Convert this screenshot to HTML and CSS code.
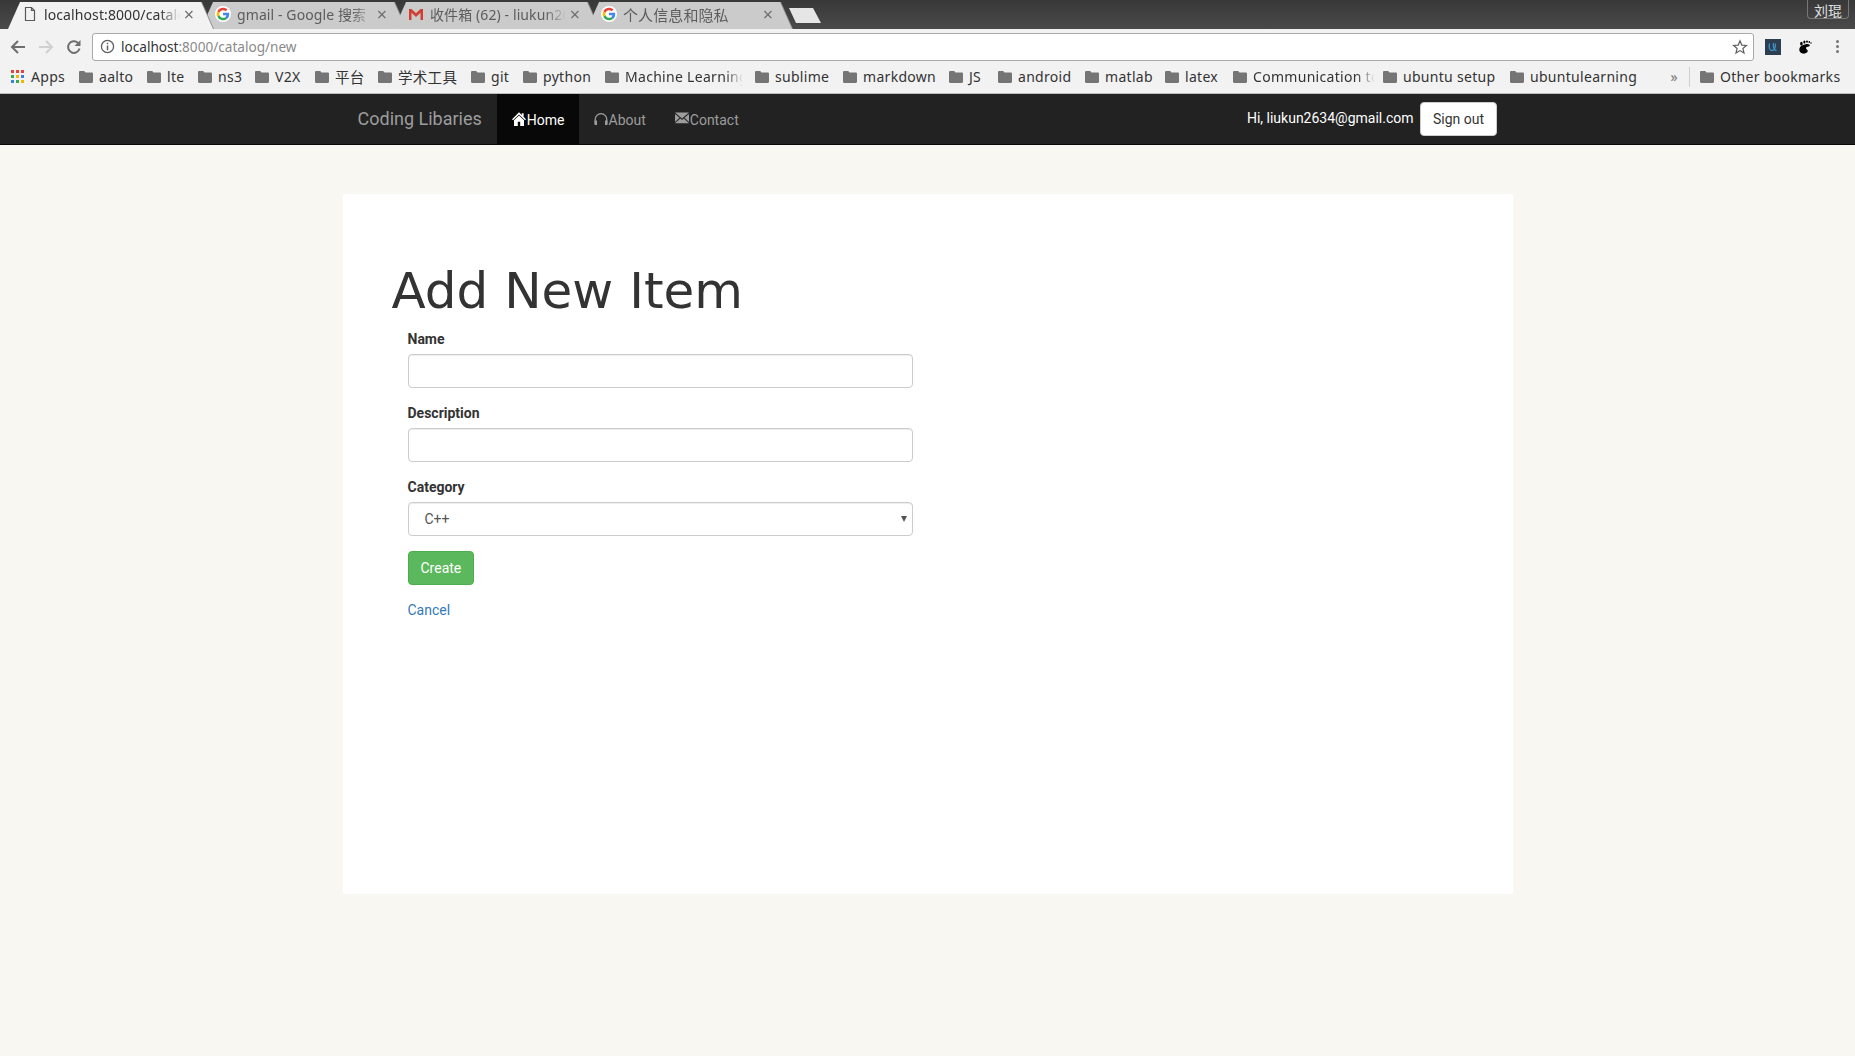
FILE: index.html
```html
<!DOCTYPE html>
<html lang="en">
<head>
    <meta charset="UTF-8">
    <meta name="viewport" content="width=device-width, initial-scale=1.0">
    <title>Add New Item</title>
    <link rel="stylesheet" href="styles.css">
</head>
<body>
<svg class="defs" width="0" height="0">
    <symbol id="folder" viewBox="0 0 14 12"><path d="M1.2 0h4l1.3 1.6h6.3c.7 0 1.2.5 1.2 1.2v8c0 .7-.5 1.2-1.2 1.2H1.2C.5 12 0 11.500 0 10.800V1.200C0 .5.500 0 1.200 0z" fill="#757575"/></symbol>
    <symbol id="google" viewBox="3 3 42 42">
        <circle cx="24" cy="24" r="21" fill="#fff"/>
        <path fill="#ea4335" d="M24 14c2.700 0 5 .9 6.900 2.700l4.800-4.800C32.600 9.100 28.700 7.400 24 7.400c-6.500 0-12.100 3.700-14.800 9.100l5.600 4.300C16.100 16.900 19.700 14 24 14z"/>
        <path fill="#4285f4" d="M40.200 24.400c0-1.200-.1-2.300-.3-3.400H24v6.400h9.100c-.4 2.100-1.600 3.900-3.400 5.100l5.400 4.200c3.200-2.900 5.100-7.200 5.100-12.300z"/>
        <path fill="#fbbc05" d="M14.800 27.200c-.3-1-.5-2.100-.5-3.200s.2-2.200.5-3.200l-5.600-4.300C8.100 18.800 7.400 21.300 7.400 24s.7 5.200 1.800 7.500l5.600-4.300z"/>
        <path fill="#34a853" d="M24 40.600c4.500 0 8.300-1.500 11.100-4l-5.400-4.200c-1.500 1-3.400 1.600-5.700 1.600-4.300 0-7.900-2.900-9.200-6.800l-5.600 4.300c2.700 5.400 8.300 9.100 14.800 9.100z"/>
    </symbol>
</svg>

<div class="tabstrip">
    <div class="tab tab-active">
        <svg class="tab-icon" viewBox="0 0 16 16"><path d="M3.500 1.500h6l3 3v10h-9z M9.500 1.500v3h3" fill="#f2f2f2" stroke="#5a5a5a" stroke-width="1.200"/></svg>
        <span class="tab-title">localhost:8000/catalog/new</span>
        <span class="tab-close">×</span>
    </div>
    <div class="tab">
        <svg class="tab-icon"><use href="#google"/></svg>
        <span class="tab-title">gmail - Google 搜索</span>
        <span class="tab-close">×</span>
    </div>
    <div class="tab">
        <svg class="tab-icon" viewBox="0 0 16 16"><path d="M1 3h2.500L8 7.200 12.500 3H15v11h-2.500V6.800L8 11 3.500 6.800V14H1z" fill="#d23f31"/></svg>
        <span class="tab-title">收件箱 (62) - liukun2634@gmail.com</span>
        <span class="tab-close">×</span>
    </div>
    <div class="tab">
        <svg class="tab-icon"><use href="#google"/></svg>
        <span class="tab-title tab-title-cjk">个人信息和隐私</span>
        <span class="tab-close">×</span>
    </div>
    <div class="new-tab"></div>
    <div class="profile">刘琨</div>
</div>

<div class="toolbar">
    <svg class="tool" viewBox="0 0 16 16"><path d="M15 8H2.500M8 2L2 8l6 6" fill="none" stroke="#6e6e6e" stroke-width="2"/></svg>
    <svg class="tool" viewBox="0 0 16 16"><path d="M1 8h12.500M8 2l6 6-6 6" fill="none" stroke="#d0d0d0" stroke-width="2"/></svg>
    <svg class="tool" viewBox="0 0 16 16"><path d="M13.500 9.500A5.800 5.800 0 1 1 12 4" fill="none" stroke="#6e6e6e" stroke-width="2"/><path d="M14.500 1v6h-6z" fill="#6e6e6e"/></svg>
    <div class="urlbar">
        <svg class="info" viewBox="0 0 16 16"><circle cx="8" cy="8" r="6.500" fill="none" stroke="#5f5f5f" stroke-width="1.400"/><path d="M7.200 7h1.600v5H7.200zM7.200 4h1.600v1.600H7.200z" fill="#5f5f5f"/></svg>
        <span class="url">localhost<span class="url-rest">:8000/catalog/new</span></span>
        <svg class="star" viewBox="0 0 16 16"><path d="M8 1.800l1.800 4.300 4.600.4-3.500 3 1.100 4.500L8 11.600 4 14l1.100-4.500-3.500-3 4.600-.4z" fill="none" stroke="#5f5f5f" stroke-width="1.200"/></svg>
    </div>
    <div class="ext-u"><svg viewBox="0 0 16 16"><path d="M4.500 4.500c-.8 3.500-.3 7 2.500 7s3.500-3.500 3.500-7M8.500 4c-.5 3 0 7.500 3 7.500" fill="none" stroke="#3f8fc0" stroke-width="1.300"/></svg></div>
    <svg class="ext-foot" viewBox="0 0 16 16"><path d="M8.800 5.200c2.800-.5 4.600.6 3.800 1.900-.8 1.100-3.200.4-3.600 1.800-.3 1.200 2 1.500 1.800 3.200-.2 1.700-2.700 3-5 2.400C3 13.900 1.700 11.500 2.600 9c.8-2.200 3.500-3.500 6.200-3.800z" fill="#000"/><ellipse cx="4.400" cy="4.700" rx="1.300" ry="1.900" fill="#000"/><ellipse cx="7.400" cy="3" rx="1.100" ry="1.500" fill="#000"/><ellipse cx="10" cy="2.600" rx=".9" ry="1.200" fill="#000"/><ellipse cx="12.300" cy="3" rx=".8" ry="1" fill="#000"/><ellipse cx="14" cy="4" rx=".7" ry=".8" fill="#000"/></svg>
    <div class="dots"><i></i><i></i><i></i></div>
</div>

<div class="bookmarks">
    <span class="bm bm-apps">
        <span class="apps-grid">
            <i class="c-r"></i><i class="c-r"></i><i class="c-r"></i>
            <i class="c-g"></i><i class="c-y"></i><i class="c-b"></i>
            <i class="c-b"></i><i class="c-g"></i><i class="c-y"></i>
        </span>Apps
    </span>
    <span class="bm bm-aalto"><svg><use href="#folder"/></svg>aalto</span>
    <span class="bm bm-lte"><svg><use href="#folder"/></svg>lte</span>
    <span class="bm bm-ns3"><svg><use href="#folder"/></svg>ns3</span>
    <span class="bm bm-v2x"><svg><use href="#folder"/></svg>V2X</span>
    <span class="bm bm-pt bm-cjk"><svg><use href="#folder"/></svg>平台</span>
    <span class="bm bm-xs bm-cjk"><svg><use href="#folder"/></svg>学术工具</span>
    <span class="bm bm-git"><svg><use href="#folder"/></svg>git</span>
    <span class="bm bm-python"><svg><use href="#folder"/></svg>python</span>
    <span class="bm bm-ml"><svg><use href="#folder"/></svg><span class="bm-text">Machine Learning</span></span>
    <span class="bm bm-sublime"><svg><use href="#folder"/></svg>sublime</span>
    <span class="bm bm-markdown"><svg><use href="#folder"/></svg>markdown</span>
    <span class="bm bm-js"><svg><use href="#folder"/></svg>JS</span>
    <span class="bm bm-android"><svg><use href="#folder"/></svg>android</span>
    <span class="bm bm-matlab"><svg><use href="#folder"/></svg>matlab</span>
    <span class="bm bm-latex"><svg><use href="#folder"/></svg>latex</span>
    <span class="bm bm-comm"><svg><use href="#folder"/></svg><span class="bm-text">Communication tools</span></span>
    <span class="bm bm-setup"><svg><use href="#folder"/></svg>ubuntu setup</span>
    <span class="bm bm-learn"><svg><use href="#folder"/></svg>ubuntulearning</span>
    <span class="bm-more">»</span>
    <span class="bm bm-other"><svg><use href="#folder"/></svg>Other bookmarks</span>
</div>

<nav class="navbar">
    <div class="nav-inner">
        <a class="brand">Coding Libaries</a>
        <a class="nav-link active">
            <svg class="glyph" viewBox="0 0 14 14"><path d="M7 .3L0 7.200l1 1 6-5.700 6 5.700 1-1-2.400-2.400V1.200H9.800v1.800L7 .3zM2 8.300V14h3.800V9.800h2.400V14H12V8.300L7 3.600z" fill="#fff"/></svg>Home
        </a>
        <a class="nav-link">
            <svg class="glyph" viewBox="0 0 14 14"><path d="M1.200 12V7.500a5.800 5.800 0 0 1 11.600 0V12" fill="none" stroke="#9d9d9d" stroke-width="1.300"/><path d="M.6 8.500h2.400V13H.6zM11 8.500h2.400V13H11z" fill="#9d9d9d"/></svg>About
        </a>
        <a class="nav-link">
            <svg class="glyph glyph-mail" viewBox="0 0 14 14"><path d="M0 1.500h14L7 7.500zM0 3v8l4.500-4.200zM14 3v8L9.500 6.800zM0 12.300h14L8.700 7.600 7 9 5.300 7.600z" fill="#9d9d9d"/></svg>Contact
        </a>
        <div class="nav-right">
            <span class="greeting">Hi, liukun2634@gmail.com</span>
            <button class="btn-signout">Sign out</button>
        </div>
    </div>
</nav>

<div class="card">
    <h1>Add New Item</h1>
    <form class="item-form">
        <div class="form-group">
            <label for="name">Name</label>
            <input type="text" id="name">
        </div>
        <div class="form-group">
            <label for="description">Description</label>
            <input type="text" id="description">
        </div>
        <div class="form-group">
            <label for="category">Category</label>
            <select id="category">
                <option>C++</option>
                <option>Python</option>
            </select>
        </div>
        <button type="button" class="btn-create">Create</button>
    </form>
    <a class="cancel" href="#">Cancel</a>
</div>
</body>
</html>
```

FILE: styles.css
```css
* {
    box-sizing: border-box;
}
html, body {
    height: 100%;
}
body {
    margin: 0;
    background: #f8f7f2;
    color: #333;
    font-family: Roboto, Arial, sans-serif;
    font-size: 14px;
    overflow: hidden;
}
.defs {
    display: block;
    height: 0;
}

/* browser tabs */
.tabstrip {
    display: flex;
    height: 29px;
    padding-left: 8px;
    background: linear-gradient(#383838, #4a4a4a);
}
.tab {
    position: relative;
    flex: none;
    display: flex;
    align-items: center;
    width: 205px;
    height: 27px;
    margin-top: 2px;
    margin-right: -12px;
    padding: 0 17px 3px 14px;
    color: #5c5c5c;
    font-family: "Noto Sans", "Noto Sans CJK SC", sans-serif;
    font-size: 14px;
    letter-spacing: 0.1px;
    filter: drop-shadow(1px 0 0 #8f8f8f);
}
.tab::before {
    content: "";
    position: absolute;
    inset: 0;
    z-index: -1;
    background: #cbcbcb;
    clip-path: polygon(0 100%, 12px 0, 193px 0, 205px 100%);
}
.tab-active {
    z-index: 1;
    color: #333;
}
.tab-active::before {
    background: #f2f2f2;
}
.tab-icon {
    flex: none;
    width: 16px;
    height: 16px;
    margin-right: 4px;
}
.tab-title {
    flex: 1;
    margin-left: 2px;
    overflow: hidden;
    white-space: nowrap;
    -webkit-mask-image: linear-gradient(to right, #000 85%, transparent 100%);
    mask-image: linear-gradient(to right, #000 85%, transparent 100%);
}
.tab-title-cjk {
    font-size: 15px;
    -webkit-mask-image: none;
    mask-image: none;
}
.tab-close {
    flex: none;
    width: 14px;
    margin-left: 2px;
    color: #6e6e6e;
    font-size: 18px;
    text-align: center;
}
.new-tab {
    flex: none;
    width: 32px;
    height: 15px;
    margin: 8px 0 0 9px;
    background: #e6e6e6;
    clip-path: polygon(0 0, 24px 0, 100% 100%, 7px 100%);
}
.profile {
    flex: none;
    height: 19px;
    margin-left: auto;
    margin-right: 6px;
    padding: 0 6px;
    border: 1px solid #777;
    border-top: none;
    border-radius: 0 0 4px 4px;
    color: #e0e0e0;
    font-family: "Noto Sans CJK SC", sans-serif;
    font-size: 14px;
    line-height: 21px;
}

/* toolbar */
.toolbar {
    display: flex;
    align-items: center;
    height: 33px;
    padding: 2px 0 0 10px;
    background: #f2f2f2;
}
.tool {
    flex: none;
    width: 16px;
    height: 16px;
    margin-right: 12px;
}
.urlbar {
    flex: none;
    display: flex;
    align-items: center;
    width: 1662px;
    height: 28px;
    margin-left: -2px;
    padding: 0 5px 0 7px;
    background: #fff;
    border: 1px solid #a9a9a9;
    border-radius: 3px;
}
.info {
    width: 15px;
    height: 15px;
    margin-right: 6px;
}
.url {
    flex: 1;
    color: #333;
    font-family: "Noto Sans", sans-serif;
    font-size: 13.600px;
}
.url-rest {
    color: #8a8a8a;
}
.star {
    width: 16px;
    height: 16px;
}
.ext-u {
    flex: none;
    width: 16px;
    height: 16px;
    margin-left: 11px;
    background: #2c3e50;
}
.ext-u svg {
    display: block;
}
.ext-foot {
    flex: none;
    width: 16px;
    height: 16px;
    margin-left: 16px;
}
.dots {
    flex: none;
    display: flex;
    flex-direction: column;
    gap: 2px;
    margin-left: 23px;
}
.dots i {
    width: 3px;
    height: 3px;
    background: #757575;
    border-radius: 50%;
}

/* bookmarks */
.bookmarks {
    display: flex;
    align-items: center;
    height: 32px;
    padding: 0 0 2px 11px;
    background: #f2f2f2;
    border-bottom: 1px solid #bdbdbd;
    color: #333;
    font-family: "Noto Sans", "Noto Sans CJK SC", sans-serif;
    font-size: 14px;
    letter-spacing: 0.3px;
    white-space: nowrap;
}
.bm {
    flex: none;
    display: flex;
    align-items: center;
    overflow: hidden;
}
.bm-cjk {
    font-size: 14.500px;
}
.bm svg {
    flex: none;
    width: 14px;
    height: 12px;
    margin-right: 6px;
}
.apps-grid {
    display: grid;
    grid-template-columns: repeat(3, 3px);
    gap: 2px;
    margin-right: 7px;
}
.apps-grid i {
    height: 3px;
}
.c-r { background: #e2463a; }
.c-g { background: #36a853; }
.c-y { background: #f5b400; }
.c-b { background: #3f7fe0; }
.bm-text {
    overflow: hidden;
    -webkit-mask-image: linear-gradient(to right, #000 85%, transparent 100%);
    mask-image: linear-gradient(to right, #000 85%, transparent 100%);
}
.bm-apps { width: 68px; }
.bm-aalto { width: 68px; }
.bm-lte { width: 51px; }
.bm-ns3 { width: 57px; }
.bm-v2x { width: 60px; }
.bm-pt { width: 63px; }
.bm-xs { width: 93px; }
.bm-git { width: 52px; }
.bm-python { width: 82px; }
.bm-ml { width: 150px; padding-right: 12px; }
.bm-sublime { width: 88px; }
.bm-markdown { width: 106px; }
.bm-js { width: 49px; }
.bm-android { width: 87px; }
.bm-matlab { width: 80px; }
.bm-latex { width: 68px; }
.bm-comm { width: 150px; padding-right: 8px; }
.bm-setup { width: 127px; }
.bm-learn { width: 154px; }
.bm-more {
    flex: none;
    width: 26px;
    padding-right: 11px;
    border-right: 1px solid #cfcfcf;
    color: #757575;
    line-height: 20px;
    text-align: right;
}
.bm-other {
    margin-left: 10px;
}

/* site nav */
.navbar {
    height: 51px;
    background: #222;
    border-bottom: 1px solid #080808;
}
.nav-inner {
    display: flex;
    width: 1170px;
    height: 50px;
    margin: 0 auto;
    padding: 0 15px;
}
.brand {
    padding: 15px 15px 15px 0;
    color: #9d9d9d;
    font-size: 18px;
    line-height: 20px;
}
.nav-link {
    display: flex;
    align-items: center;
    padding: 2px 14px 0 15px;
    color: #9d9d9d;
}
.nav-link.active {
    background: #080808;
    color: #fff;
}
.glyph {
    flex: none;
    width: 14px;
    height: 14px;
    margin-top: -3px;
    margin-right: 1px;
}
.glyph-mail {
    margin-top: -5px;
}
.nav-right {
    display: flex;
    align-items: center;
    gap: 6px;
    margin-left: auto;
    margin-right: 1px;
}
.greeting {
    color: #fff;
    margin-top: -2px;
}
.btn-signout {
    width: 77px;
    height: 34px;
    padding: 6px 0 6px 1px;
    background: #fff;
    border: 1px solid #ccc;
    border-radius: 4px;
    color: #333;
    font-family: inherit;
    font-size: 14px;
}

/* form card */
.card {
    width: 1170px;
    height: 700px;
    margin: 49px auto 0;
    padding: 64px 49px 0;
    background: #fff;
}
h1 {
    margin: 0 0 5px;
    color: #333;
    font-family: "DejaVu Sans", Verdana, sans-serif;
    font-size: 50px;
    font-weight: 400;
    line-height: 66px;
}
.item-form {
    width: 505px;
    margin-left: 16px;
}
.form-group {
    margin-bottom: 15px;
}
label {
    display: block;
    margin-bottom: 5px;
    font-weight: 700;
    line-height: 20px;
}
input,
select {
    display: block;
    width: 100%;
    height: 34px;
    padding: 6px 12px;
    background: #fff;
    border: 1px solid #ccc;
    border-radius: 4px;
    box-shadow: inset 0 1px 1px rgba(0, 0, 0, 0.075);
    color: #555;
    font-family: inherit;
    font-size: 14px;
}
select {
    padding-left: 16px;
    background: #fff url("data:image/svg+xml,%3Csvg xmlns='http://www.w3.org/2000/svg' width='6' height='6'%3E%3Cpath d='M0 0h6L3 6z' fill='%23555'/%3E%3C/svg%3E") no-repeat right 5px center;
    appearance: none;
    -webkit-appearance: none;
}
.btn-create {
    display: block;
    height: 34px;
    padding: 6px 12px;
    background: #5cb85c;
    border: 1px solid #4cae4c;
    border-radius: 4px;
    color: #fff;
    font-family: inherit;
    font-size: 14px;
}
.cancel {
    display: inline-block;
    margin: 15px 0 0 16px;
    color: #337ab7;
    line-height: 20px;
    text-decoration: none;
}
```
